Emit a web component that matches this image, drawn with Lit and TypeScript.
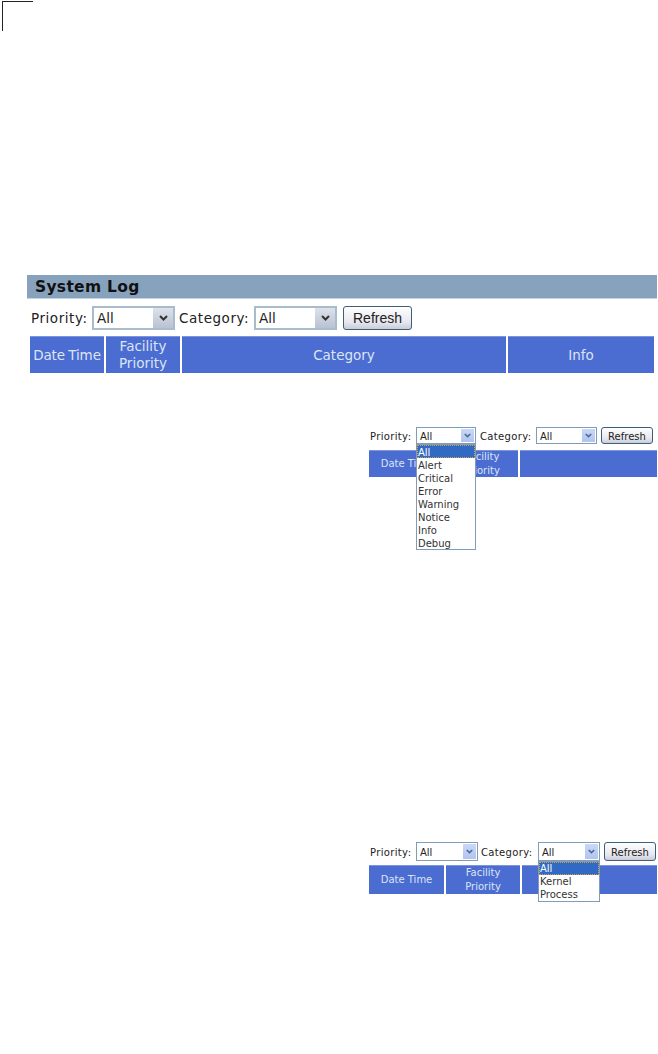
import { css, html, LitElement, nothing } from 'lit';
import { customElement, property } from 'lit/decorators.js';

const PRIORITIES = ['All', 'Alert', 'Critical', 'Error', 'Warning', 'Notice', 'Info', 'Debug'];
const CATEGORIES = ['All', 'Kernel', 'Process'];

@customElement('log-select')
export class LogSelect extends LitElement {
  static override styles = css`
    :host {
      display: block;
      position: relative;
    }

    .box {
      display: flex;
      align-items: stretch;
      justify-content: space-between;
      box-sizing: border-box;
      height: 100%;
      background: #fff;
      border: 2px solid #a9bccd;
      padding-left: 3px;
    }

    :host([small]) .box {
      border-width: 1px;
      border-color: #7f9db9;
    }

    .value {
      align-self: center;
    }

    :host([small]) .value {
      padding-top: 1px;
    }

    .arrow {
      display: flex;
      align-items: center;
      justify-content: center;
      width: 20px;
      background: linear-gradient(#dde2ea, #b9c2d2);
    }

    :host([small]) .arrow {
      width: 13px;
      margin: 1px 1px 1px 0;
      background: linear-gradient(#c9d8f6, #b1c4ee);
    }

    :host([small]) svg {
      width: 7px;
      height: 5px;
    }

    :host([small]) path {
      stroke: #4a6a9a;
    }

    .menu {
      position: absolute;
      z-index: 2;
      top: 100%;
      left: 0;
      right: 0;
      box-sizing: border-box;
      background: #fff;
      border: 1px solid #7f9db9;
      letter-spacing: 0;
    }

    .item {
      height: 13px;
      line-height: var(--item-line, 13px);
      padding-left: 1px;
      color: #333;
    }

    .item--active {
      background: #316ac5;
      color: #fff;
      outline: 1px dotted #d8a040;
      outline-offset: -1px;
    }
  `;

  @property({ type: Array })
  options: string[] = [];

  @property({ type: Boolean })
  open = false;

  @property({ type: Boolean, reflect: true })
  small = false;

  override render() {
    return html`<div class="box">
        <span class="value">${this.options[0]}</span>
        <span class="arrow">
          <svg width="9" height="6" viewBox="0 0 9 6">
            <path d="M1 1l3.5 3.5L8 1" fill="none" stroke="#333" stroke-width="2" />
          </svg>
        </span>
      </div>
      ${this.open
        ? html`<div class="menu">
            ${this.options.map(
              (option, index) =>
                html`<div class="item ${index === 0 ? 'item--active' : ''}">${option}</div>`,
            )}
          </div>`
        : nothing}`;
  }
}

@customElement('app-root')
export class AppRoot extends LitElement {
  static override styles = css`
    :host {
      display: block;
      width: 658px;
      height: 1054px;
      overflow: hidden;
      background: #fff;
      font-family: 'DejaVu Sans', sans-serif;
      color: #222;
    }

    .corner {
      width: 30px;
      height: 29px;
      margin: 1px 0 0 2px;
      border-top: 1px solid #222;
      border-left: 1px solid #222;
    }

    .main {
      margin: 244px 1px 0 27px;
      font-size: 13.5px;
    }

    .title {
      height: 23px;
      line-height: 25px;
      padding-left: 8px;
      background: #87a2bd;
      box-shadow: 0 1px #c5d2e0;
      color: #111;
      font-size: 15.5px;
      font-weight: bold;
      letter-spacing: 0.3px;
    }

    .toolbar {
      display: flex;
      align-items: stretch;
    }

    .main .toolbar {
      height: 24px;
      margin: 8px 0 6px 4px;
    }

    .label {
      align-self: center;
      white-space: nowrap;
    }

    .main .label {
      letter-spacing: 0.55px;
    }

    .main .label--priority {
      width: 61px;
    }

    .main .label--category {
      width: 75px;
      margin-left: 4px;
    }

    .main .select {
      width: 83px;
    }

    .refresh {
      box-sizing: border-box;
      background: linear-gradient(#fff, #e6e6ee 70%, #c9ccd6);
      border: 1px solid #3c5f7d;
      border-radius: 3px;
      color: #222;
      font: inherit;
      padding: 0;
    }

    .main .refresh {
      width: 69px;
      margin-left: 6px;
      font-family: 'Liberation Sans', sans-serif;
      font-size: 14px;
    }

    .columns {
      display: grid;
      grid-template-rows: minmax(0, 1fr);
      column-gap: 2px;
    }

    .main .columns {
      grid-template-columns: 74px 74px 324px 146px;
      height: 37px;
      margin-left: 3px;
    }

    .cell {
      display: flex;
      align-items: center;
      justify-content: center;
      box-sizing: border-box;
      padding-top: 1px;
      text-align: center;
      line-height: 1.24;
      background: #4b6dd1;
      box-shadow: inset 0 1px #7d95dd;
      color: #dde4f5;
    }

    .main .cell--date {
      letter-spacing: -0.1px;
      word-spacing: -1px;
    }

    .shot {
      margin-left: 370px;
      font-size: 10px;
    }

    .shot .label {
      padding-top: 1px;
      letter-spacing: 0.35px;
    }

    .shot .columns {
      margin-left: -1px;
    }

    .shot .cell {
      line-height: 14px;
    }

    .shot .select {
      width: 61px;
    }

    .shot .label--priority {
      width: 46px;
    }

    .shot .label--category {
      width: 56px;
      margin-left: 4px;
    }

    .shot .refresh {
      width: 52px;
      margin-left: 4px;
      padding-top: 1px;
    }

    .shot--priority {
      --item-line: 15px;
      margin-top: 54px;
    }

    .shot--priority .toolbar {
      height: 17px;
      margin-bottom: 6px;
    }

    .shot--priority .select--priority {
      width: 60px;
    }

    .shot--priority .columns {
      grid-template-columns: 75px 72px 137px;
      height: 27px;
    }

    .shot--category {
      margin-top: 365px;
    }

    .shot--category .toolbar {
      height: 19px;
      margin-bottom: 4px;
    }

    .shot--category .select {
      width: 62px;
    }

    .shot--category .label--category {
      margin-left: 3px;
      width: 57px;
    }

    .shot--category .columns {
      grid-template-columns: 75px 74px 135px;
      height: 29px;
    }
  `;

  private toolbar(small: boolean, openMenu?: 'priority' | 'category') {
    return html`<div class="toolbar">
      <span class="label label--priority">Priority:</span>
      <log-select
        class="select select--priority"
        .options=${PRIORITIES}
        ?small=${small}
        ?open=${openMenu === 'priority'}
      ></log-select>
      <span class="label label--category">Category:</span>
      <log-select
        class="select select--category"
        .options=${CATEGORIES}
        ?small=${small}
        ?open=${openMenu === 'category'}
      ></log-select>
      <button class="refresh">Refresh</button>
    </div>`;
  }

  override render() {
    return html`
      <div class="corner"></div>

      <section class="main">
        <div class="title">System Log</div>
        ${this.toolbar(false)}
        <div class="columns">
          <div class="cell cell--date">Date Time</div>
          <div class="cell">Facility<br />Priority</div>
          <div class="cell">Category</div>
          <div class="cell">Info</div>
        </div>
      </section>

      <section class="shot shot--priority">
        ${this.toolbar(true, 'priority')}
        <div class="columns">
          <div class="cell">Date Time</div>
          <div class="cell">Facility<br />Priority</div>
          <div class="cell"></div>
        </div>
      </section>

      <section class="shot shot--category">
        ${this.toolbar(true, 'category')}
        <div class="columns">
          <div class="cell">Date Time</div>
          <div class="cell">Facility<br />Priority</div>
          <div class="cell"></div>
        </div>
      </section>
    `;
  }
}
